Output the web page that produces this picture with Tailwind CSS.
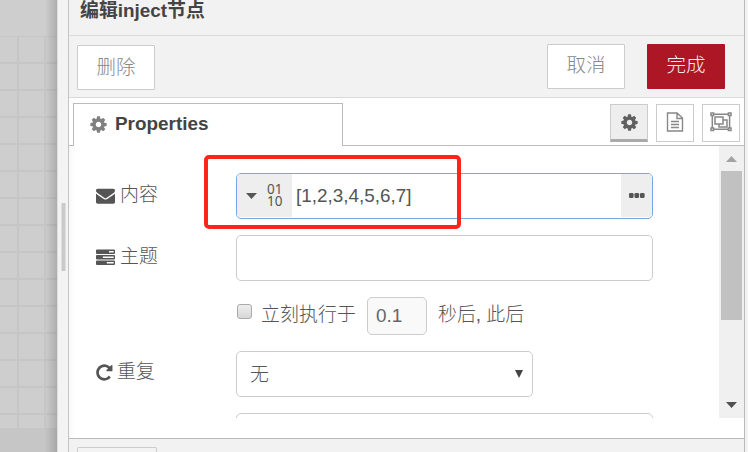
<!DOCTYPE html>
<html lang="zh-CN">
<head>
<meta charset="utf-8">
<title>编辑inject节点</title>
<script src="https://cdn.jsdelivr.net/npm/@tailwindcss/browser@4"></script>
</head>
<body class="w-[748px] h-[452px] overflow-hidden bg-[#f2f2f2] font-['Liberation_Sans','Noto_Sans_CJK_SC',sans-serif] text-[18.9px] text-[#555]">
<svg class="hidden">
  <symbol id="cog" viewBox="0 0 1792 1792"><path d="M1152 896q0-106-75-181t-181-75-181 75-75 181 75 181 181 75 181-75 75-181zm512-109v222q0 12-8 23t-20 13l-185 28q-19 54-39 91 35 50 107 138 10 12 10 25t-9 23q-27 37-99 108t-94 71q-12 0-26-9l-138-108q-44 23-91 38-16 136-29 186-7 28-36 28h-222q-14 0-24.5-8.5t-11.5-21.5l-28-184q-49-16-90-37l-141 107q-10 9-25 9-14 0-25-11-126-114-165-168-7-10-7-23 0-12 8-23 15-21 51-66.500t54-70.500q-27-50-41-99l-183-27q-13-2-21-12.500t-8-23.500v-222q0-12 8-23t19-13l186-28q14-46 39-92-40-57-107-138-10-12-10-24 0-10 9-23 26-36 98.500-107.500t94.500-71.500q13 0 26 10l138 107q44-23 91-38 16-136 29-186 7-28 36-28h222q14 0 24.500 8.500t11.500 21.500l28 184q49 16 90 37l142-107q9-9 24-9 13 0 25 10 129 119 165 170 7 8 7 22 0 12-8 23-15 21-51 66.500t-54 70.500q26 50 41 98l183 28q13 2 21 12.500t8 23.500z"/></symbol>
</svg>
<div class="flex h-full overflow-hidden">
  <!-- workspace behind the tray -->
  <div class="relative w-[57px] shrink-0 bg-[#c6c6c6] flex flex-col">
    <div class="h-9 bg-[#cecece]"></div>
    <svg class="w-[57px] h-[392px] bg-[#cecece]" shape-rendering="crispEdges">
      <defs><pattern id="grid" width="27" height="27" x="17" y="-1" patternUnits="userSpaceOnUse"><path d="M0 1H27M1 0V27" stroke="#c6c6c6" stroke-width="2"/></pattern></defs>
      <rect width="57" height="392" fill="url(#grid)"/>
    </svg>
    <div class="absolute inset-y-0 right-0 w-3 bg-linear-to-r from-transparent to-black/16"></div>
  </div>
  <div class="w-3 shrink-0 bg-[#f3f3f3] border-r border-[#c4c4c4] border-l border-l-[#dedede] pt-[203px] pl-[3px]">
    <div class="w-[5px] h-[68px] bg-[#cacaca] border-x border-[#dedede]"></div>
  </div>
  <div class="w-[676px] shrink-0 border-r border-[#b9b9b9] flex flex-col">
    <div class="h-9 shrink-0 border-b border-[#dadada] pl-[11px] font-bold text-[#444] leading-[22px]"><span class="block">编辑inject节点</span></div>
    <div class="h-[62px] shrink-0 border-b border-[#dadada] flex items-start pt-2 pl-2 pr-[19px] font-light text-[#888] text-[19.500px]">
      <button class="w-[78px] h-[45px] mt-px border border-[#ccc] bg-white rounded-[1px] font-light">删除</button>
      <button class="w-[78px] h-[45px] ml-auto border border-[#ccc] bg-white rounded-[1px] font-light pb-px">取消</button>
      <button class="w-[78px] h-[45px] ml-[22px] bg-[#ad1625] text-[#eee] rounded-[1px] font-light pb-px">完成</button>
    </div>
    <div class="h-12 shrink-0 bg-white flex">
      <div class="w-1 border-b border-[#bbb]"></div>
      <div class="w-[270px] mt-[5px] border border-b-0 border-[#bbb] flex items-center pl-[15px] pb-[2px] font-bold text-[#444]">
        <svg class="w-[19px] h-[19px] mr-[7px]" fill="#808080"><use href="#cog"/></svg>Properties
      </div>
      <div class="flex-1 border-b border-[#bbb] flex justify-end gap-2 pt-[6px] pr-[4px]">
        <div class="w-[38px] h-[38px] border border-[#ccc] border-b-3 border-b-[#aaa] bg-[#eee] flex items-center justify-center"><svg class="w-[19px] h-[19px]" fill="#606060"><use href="#cog"/></svg></div>
        <div class="w-[38px] h-[38px] border border-[#ccc] flex items-center justify-center pb-[2px]"><svg class="w-[18px] h-5" viewBox="0 0 18 20" fill="none" stroke="#888" stroke-width="1.400"><path d="M1.500 1H11L16.500 6V19H1.500ZM11 1V6.500H16M5 9.500H13M5 12.500H13M5 15.500H13"/></svg></div>
        <div class="w-[38px] h-[38px] border border-[#ccc] flex items-center justify-center pb-[2px]"><svg class="w-[22px] h-[20px]" viewBox="0 0 22 20" fill="none" stroke="#888" stroke-width="1.500"><path d="M3.500 2.200H18.500M3.500 17.300H18.500M2.300 3.500V16M19.600 3.500V16M5 5H13V12H5ZM13 8H17V15H9V12"/><path fill="white" d="M1 1H3.600V3.600H1ZM18.400 1H21V3.600H18.400ZM1 16H3.600V18.600H1ZM18.400 16H21V18.600H18.400Z"/></svg></div>
      </div>
    </div>
    <div class="h-[293px] shrink-0 bg-white border-b border-[#bbb] bg-linear-to-r from-[#f8f8f8] to-white to-[6px]">
      <div class="h-[272px] flex overflow-hidden">
        <div class="flex-1 flex flex-col gap-4 pt-[27px] pl-[27px] font-light">
          <div class="flex items-center h-[46px] shrink-0">
            <div class="w-[140px] flex items-center gap-[5px] pb-px"><svg class="w-[19px] h-[19px]" viewBox="0 0 1792 1792" fill="#555"><path d="M1792 710v794q0 66-47 113t-113 47h-1472q-66 0-113-47t-47-113v-794q44 49 101 87 362 246 497 345 57 42 92.500 65.500t94.500 48 110 24.500h2q51 0 110-24.500t94.500-48 92.500-65.500q170-123 498-345 57-39 100-87zm0-294q0 79-49 151t-122 123q-376 261-468 325-10 7-42.500 31t-54 38.500-52 32.500-57.500 27-50 9h-2q-23 0-50-9t-57.500-27-52-32.500-54-38.500-42.500-31q-91-64-262-182.500t-205-142.500q-62-42-117-115.500t-55-136.500q0-78 41.500-130t118.500-52h1472q65 0 112.500 47t47.500 113z"/></svg>内容</div>
            <div class="w-[417px] h-[46px] border border-[#72a7e8] rounded-[5px] overflow-hidden flex items-stretch font-normal pb-px">
              <div class="w-[55px] bg-[#eee] flex items-center pl-[9px] gap-[10px]">
                <svg class="w-[11px] h-[6px]" viewBox="0 0 11 6"><path d="M0 0H11L5.500 6Z" fill="#555"/></svg>
                <svg class="w-[17px] h-[24px] overflow-visible font-['Noto_Sans'] text-[13.500px]" fill="#555"><text x="0" y="10">01</text><text x="0" y="22">10</text></svg>
              </div>
              <div class="flex-1 flex items-center pl-1 pt-px">[1,2,3,4,5,6,7]</div>
              <div class="w-[31px] bg-[#eee] flex items-center justify-center pb-px"><svg class="w-[16px] h-[5px]" viewBox="0 0 16 5" fill="#555"><rect width="4.600" height="5" rx="1.300"/><rect x="5.500" width="4.600" height="5" rx="1.300"/><rect x="11" width="4.600" height="5" rx="1.300"/></svg></div>
            </div>
          </div>
          <div class="flex items-center h-[46px] shrink-0">
            <div class="w-[140px] flex items-center gap-[5px] pb-px"><svg class="w-[19px] h-[17px]" viewBox="0 0 19 17"><path fill="#555" d="M1 .5H18Q19 .5 19 1.500V4Q19 5 18 5H1Q0 5 0 4V1.500Q0 .5 1 .5ZM1 6H18Q19 6 19 7V9.500Q19 10.500 18 10.500H1Q0 10.500 0 9.500V7Q0 6 1 6ZM1 11.500H18Q19 11.500 19 12.500V15Q19 16 18 16H1Q0 16 0 15V12.500Q0 11.500 1 11.500Z"/><path fill="white" d="M13 2H17.700V3.500H13ZM6.800 7.500H17.700V9H6.800ZM10.800 13H17.700V14.500H10.800Z"/></svg>主题</div>
            <div class="w-[417px] h-[46px] border border-[#ccc] rounded-[5px]"></div>
          </div>
          <div class="flex items-center h-[38px] shrink-0 pl-[141px]">
            <div class="w-[15px] h-[15px] -mt-[9px] border border-[#aaa] rounded-[3px] bg-linear-to-b from-[#eee] to-[#d8d8d8]"></div>
            <span class="ml-[9px] pb-[2px] w-[96px] tracking-[0.100px]">立刻执行于</span>
            <div class="w-[60px] h-[38px] ml-[10px] border border-[#ccc] rounded-[5px] bg-[#f9f9f9] flex items-center pl-2 font-normal text-[#666]">0.1</div>
            <span class="ml-[11px] pb-[2px]">秒后, 此后</span>
          </div>
          <div class="flex items-center h-[46px] shrink-0">
            <div class="w-[140px] flex items-center gap-[3px] pb-[3px]"><svg class="w-[18px] h-[19px]" viewBox="128 0 1664 1792" fill="#555"><path d="M1664 256v448q0 26-19 45t-45 19h-448q-42 0-59-40-17-39 14-69l138-138q-148-137-349-137-104 0-198.500 40.500t-163.500 109.500-109.500 163.500-40.500 198.500 40.500 198.500 109.500 163.500 163.500 109.500 198.500 40.500q119 0 225-52t179-147q7-10 23-12 15 0 25 9l137 138q9 8 9.500 20.500t-7.500 22.500q-109 132-264 204.500t-327 72.500q-156 0-298-61t-245-164-164-245-61-298 61-298 164-245 245-164 298-61q147 0 284.500 55.500t244.500 156.500l130-129q29-31 70-14 39 17 39 59z"/></svg>重复</div>
            <div class="w-[297px] h-[46px] border border-[#ccc] rounded-[5px] flex items-center justify-between pl-[13px] pr-[9px]"><span class="pt-[2px]">无</span><svg class="w-2 h-2" viewBox="0 0 8 8"><path d="M0 0H8L4 8Z" fill="#444"/></svg></div>
          </div>
          <div class="w-[417px] h-[46px] shrink-0 ml-[140px] border border-[#ccc] rounded-[5px]"></div>
        </div>
        <div class="w-[25px] bg-[#f0f0f0] flex flex-col items-center">
          <svg class="w-[11px] h-[6px] mt-[10px] shrink-0" viewBox="0 0 11 6"><path d="M0 6H11L5.500 0Z" fill="#a3a3a3"/></svg>
          <div class="w-[21px] h-[149px] mt-[9px] bg-[#c1c1c1]"></div>
          <svg class="w-[11px] h-[6px] mt-auto mb-[10px]" viewBox="0 0 11 6"><path d="M0 0H11L5.500 6Z" fill="#505050"/></svg>
        </div>
      </div>
    </div>
    <div class="flex-1 pt-2 pl-2"><div class="w-20 h-[5px] border border-b-0 border-[#ccc] rounded-t-[2px] bg-[#f3f3f3]"></div></div>
  </div>
</div>
<!-- highlight annotation -->
<div class="absolute left-[204px] top-[155px] w-[257px] h-[74px] border-4 border-[#ff2419] rounded-[5px]"></div>
</body>
</html>
